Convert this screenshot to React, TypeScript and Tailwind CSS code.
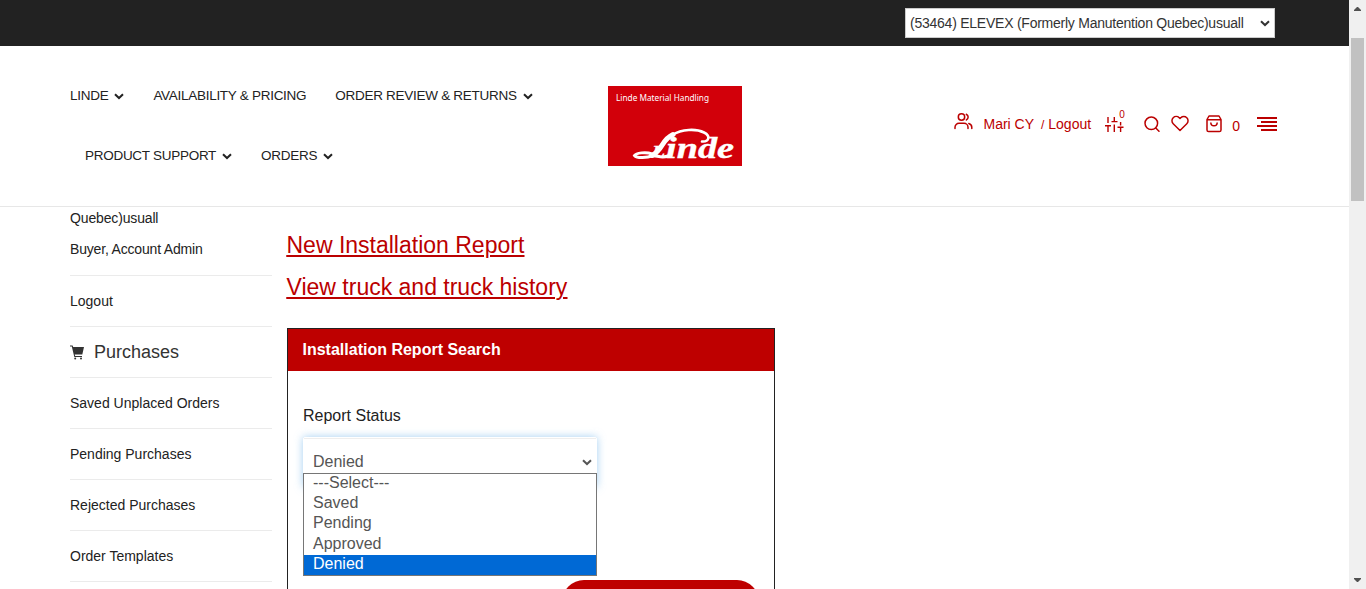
import React from "react";

function Chevron({ className = "" }: { className?: string }) {
  return (
    <svg className={className} width="10" height="7" viewBox="0 0 10 7" fill="none" stroke="currentColor" strokeWidth="2">
      <path d="M1 1.2 L5 5 L9 1.2" />
    </svg>
  );
}

function NavItem({ label, menu = true }: { label: string; menu?: boolean }) {
  return (
    <a className="flex h-[60px] items-center whitespace-nowrap text-[13.5px] tracking-[-0.28px] text-[#222]">
      {label}
      {menu && <Chevron className="ml-[6px]" />}
    </a>
  );
}

function Logo() {
  return (
    <svg width="134" height="80" viewBox="0 0 134 80" className="bg-[#d2000a]">
      <text x="8" y="15" fill="#fff" fontSize="9" fontFamily="'Noto Sans', sans-serif" textLength="93" lengthAdjust="spacingAndGlyphs">
        Linde Material Handling
      </text>
      <g fill="#fff" stroke="#fff" strokeWidth="0.4" fontFamily="'Liberation Serif', serif" fontWeight="bold" fontStyle="italic">
        <text x="44" y="71" fontSize="17" textLength="13" lengthAdjust="spacingAndGlyphs">L</text>
        <text x="58" y="71.5" fontSize="29" textLength="68" lengthAdjust="spacingAndGlyphs">inde</text>
      </g>
      <g fill="none" stroke="#fff" strokeLinecap="round">
        <path d="M94 55.500 C101 56 103 50 96 46.500 C88 42.500 74 43 64 49" strokeWidth="2.600" />
        <path d="M65 48.500 C53 54 56 63 44 69.500" strokeWidth="5" />
        <path d="M44 68 C38 65.500 28 67 26.500 69.500 C29 72.500 39 72 45 69.500 C50 69.500 53 72.500 60 70" strokeWidth="3" />
      </g>
    </svg>
  );
}

function HeaderTools() {
  return (
    <div className="flex h-[26px] items-start text-[14px] text-[#b00]">
      <svg className="mt-[2px]" width="19" height="17" viewBox="0 0 19 17" fill="none" stroke="currentColor" strokeWidth="1.5" strokeLinecap="round">
        <circle cx="7.5" cy="4" r="3.2" />
        <path d="M1 15.5v-1.2a4 4 0 0 1 4-4h5a4 4 0 0 1 4 4v1.2M12.300 1.200a3.200 3.200 0 0 1 0 5.800M14.800 10.400a4 4 0 0 1 3 4v1" />
      </svg>
      <span className="mt-[3px] ml-[10.5px] leading-5">Mari CY</span>
      <span className="mt-[3px] ml-[7px] leading-5"><span className="text-[12px]">/</span> Logout</span>
      <div className="relative mt-[5px] ml-[14px] h-[18px] w-[19px]">
        <svg width="19" height="18" viewBox="0 0 19 18" fill="none" stroke="currentColor" strokeWidth="1.4">
          <path d="M3 1v6M3 10v6M0 9.8h6M9.3 1v4.8M9.3 8.5V16M6.5 5.6h6M15.6 6v3.5M15.6 12v4M12.5 11.3h6" />
        </svg>
        <span className="absolute -top-[8px] left-[14px] text-[10px] leading-[14px]">0</span>
      </div>
      <svg className="mt-[5px] ml-5" width="16" height="17" viewBox="0 0 16 17" fill="none" stroke="currentColor" strokeWidth="1.5" strokeLinecap="round">
        <circle cx="7.3" cy="7.3" r="6.3" />
        <path d="M11.8 12L15 15.2" />
      </svg>
      <svg className="mt-[4px] ml-[11px]" width="18" height="17" viewBox="0 0 24 23" fill="none" stroke="currentColor" strokeWidth="2" strokeLinejoin="round">
        <path d="M21.2 3.6a5.7 5.7 0 0 0-8.1 0L12 4.7l-1.1-1.1a5.7 5.7 0 0 0-8.1 8.1L12 21l9.2-9.300a5.700 5.700 0 0 0 0-8.100z" />
      </svg>
      <svg className="mt-[4px] ml-[17px]" width="16" height="18" viewBox="0 0 16 18" fill="none" stroke="currentColor" strokeWidth="1.5" strokeLinejoin="round">
        <path d="M3 1h10l2 3.500V15a1.600 1.600 0 0 1-1.600 1.600H2.600A1.600 1.600 0 0 1 1 15V4.500zM1 4.700h14M4.800 7.500c0 4.400 6.400 4.400 6.400 0" />
      </svg>
      <span className="mt-[5px] ml-[10px] leading-5">0</span>
      <svg className="mt-[6px] ml-[17px]" width="21" height="15" viewBox="0 0 21 15" fill="currentColor">
        <path d="M0 0h20v2H0zM4 4h16v2H4zM0 8h20v2H0zM4 12h16v2H4z" />
      </svg>
    </div>
  );
}

function SideLink({ label }: { label: string }) {
  return <a className="flex h-[51px] shrink-0 items-center border-b border-[#ebebeb] text-[14px]">{label}</a>;
}

function Sidebar() {
  return (
    <aside className="w-[202px] shrink-0 text-[14px] text-[#222]">
      <div className="flex h-[69px] flex-col border-b border-[#ebebeb]">
        <span className="mt-[1px] leading-5 tracking-[-0.15px]">Quebec)usuall</span>
        <span className="mt-[11px] leading-5 tracking-[-0.18px]">Buyer, Account Admin</span>
      </div>
      <SideLink label="Logout" />
      <div className="flex h-[51px] items-center border-b border-[#ebebeb] text-[18px] text-[#333]">
        <svg className="mr-[10px]" width="14" height="15" viewBox="0 0 14 15" fill="currentColor">
          <path d="M0 .5h2.600l.6 1.500H14l-1.700 7.500H4.700l.5 1.500H12v1H4.300L1.800 1.500H0z" />
          <circle cx="5.200" cy="13.500" r="1" />
          <circle cx="11" cy="13.500" r="1" />
        </svg>
        Purchases
      </div>
      {["Saved Unplaced Orders", "Pending Purchases", "Rejected Purchases", "Order Templates"].map((l) => (
        <SideLink key={l} label={l} />
      ))}
    </aside>
  );
}

function StatusSelect() {
  const options = ["---Select---", "Saved", "Pending", "Approved", "Denied"];
  const rows = ["h-[19px] leading-[18px]", "h-5 leading-5", "h-5 leading-5", "h-[22px] leading-[22px]", "h-5 leading-[18px]"];
  return (
    <div className="relative mt-[10px] h-[50px] w-[294px] rounded-[2px] border border-white bg-white text-[16px] text-[#555] shadow-[0_0_8px_rgba(102,175,233,0.6)]">
      <div className="flex h-[46px] items-center justify-between border-t border-[#eee] pr-[4px] pl-[9px]">
        Denied
        <Chevron className="mt-0.5" />
      </div>
      <ul className="absolute top-[35px] -left-px w-[294px] border border-[#767676] bg-white">
        {options.map((o, i) => (
          <li key={o} className={`${rows[i]} pl-[9px] ${i === 4 ? "bg-[#0069d5] text-white" : ""}`}>
            {o}
          </li>
        ))}
      </ul>
    </div>
  );
}

function Scrollbar() {
  return (
    <div className="flex h-full w-[17px] flex-col items-center bg-[#f0f0f0] text-[#505050]">
      <svg className="mt-[7px]" width="7" height="4" viewBox="0 0 7 4" fill="currentColor"><path d="M3 0h1l3 3v1H0V3z" /></svg>
      <div className="mt-[27px] h-[163px] w-[13px] bg-[#c1c1c1]" />
      <svg className="mt-auto mb-[7px]" width="7" height="4" viewBox="0 0 7 4" fill="currentColor"><path d="M0 0h7v1L4 4H3L0 1z" /></svg>
    </div>
  );
}

export default function App() {
  return (
    <div className="flex h-[589px] w-[1366px] overflow-hidden bg-white font-['Liberation_Sans',Arial,sans-serif]">
      <div className="flex h-full w-[1349px] flex-col overflow-hidden">
        <div className="flex h-[46px] shrink-0 justify-end bg-[#222] pt-2 pr-[74px]">
          <div className="flex h-[30px] w-[370px] items-center justify-between border border-[#ccc] bg-white pr-1 pl-1 text-[14px] tracking-[-0.24px] text-[#333]">
            (53464) ELEVEX (Formerly Manutention Quebec)usuall
            <Chevron />
          </div>
        </div>
        <header className="flex h-[161px] shrink-0 border-b border-[#e7e7e7] pl-[70px]">
          <nav className="w-[538px] pt-5">
            <div className="flex gap-[29px]">
              <NavItem label="LINDE" />
              <NavItem label="AVAILABILITY & PRICING" menu={false} />
              <NavItem label="ORDER REVIEW & RETURNS" />
            </div>
            <div className="flex gap-[29px] pl-[15px]">
              <NavItem label="PRODUCT SUPPORT" />
              <NavItem label="ORDERS" />
            </div>
          </nav>
          <div className="w-[134px] pt-10"><Logo /></div>
          <div className="pt-[65px] pl-[212px]"><HeaderTools /></div>
        </header>
        <div className="flex min-h-0 flex-1 pl-[70px]">
          <Sidebar />
          <main className="ml-[15px] w-[488px] text-[#222]">
            <div className="mt-[17px] flex flex-col text-[23px] leading-[42px] text-[#b00] underline decoration-2 underline-offset-2">
              <a className="-ml-[0.5px]">New Installation Report</a>
              <a className="-ml-[0.5px]">View truck and truck history</a>
            </div>
            <section className="mt-[20px] h-[300px] border border-[#222]">
              <h2 className="flex h-[42px] items-center bg-[#be0000] pl-[14.5px] text-[16px] font-bold text-white">Installation Report Search</h2>
              <div className="flex flex-col pl-[15px]">
                <label className="mt-[34px] text-[16px] leading-[22px]">Report Status</label>
                <StatusSelect />
                <div className="mt-[93px] ml-[259px] h-[44px] w-[197px] rounded-full bg-[#be0000]" />
              </div>
            </section>
          </main>
        </div>
      </div>
      <Scrollbar />
    </div>
  );
}
